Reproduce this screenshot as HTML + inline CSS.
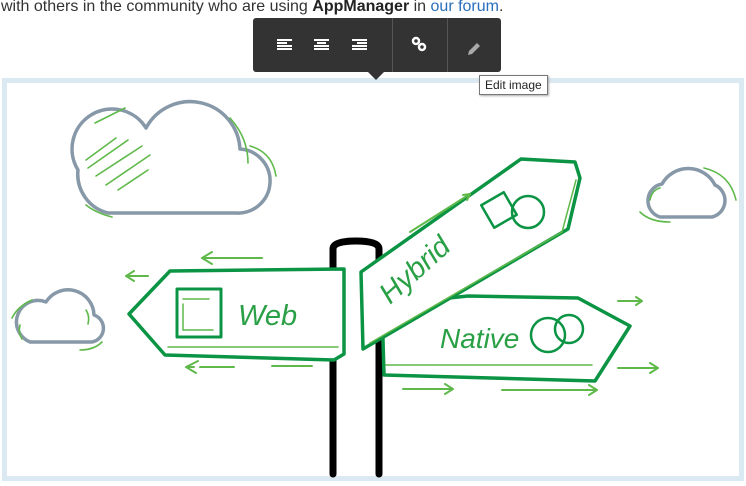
<!DOCTYPE html>
<html><head><meta charset="utf-8"><style>
html,body{margin:0;padding:0;background:#fff;width:746px;height:486px;overflow:hidden;position:relative;font-family:"Liberation Sans",sans-serif}
.t{position:absolute;left:1px;top:-2px;font-size:16px;color:#333;white-space:nowrap}
.t b{color:#222}.t a{color:#2a6ebb;text-decoration:none}
.frame{position:absolute;left:2px;top:78px;width:732px;height:393px;border:5px solid #dbe9f3}
.tb{position:absolute;left:253px;top:18px;width:248px;height:54px;background:#333;border-radius:3px}
.tb .s{position:absolute;top:0;width:1px;height:54px;background:#555}
.ptr{position:absolute;left:368px;top:72px;width:0;height:0;border-left:8px solid transparent;border-right:8px solid transparent;border-top:8px solid #333}
.tip{position:absolute;left:479px;top:75px;border:1px solid #777;background:#fff;font-size:12px;padding:2px 5px;color:#222;box-shadow:1px 1px 2px #aaa}
</style></head><body>
<div class="t">with others in the community who are using <b>AppManager</b> in <a>our forum</a>.</div>
<div class="frame"></div>
<svg style="position:absolute;left:0;top:0" width="746" height="486">
<g fill="none" stroke-linecap="round" stroke-linejoin="round">
<path d="M108,213 H236 A32,32 0 0 0 240,149 A50,50 0 0 0 146,128 A38,38 0 0 0 78,170 A40,40 0 0 0 108,213 Z" stroke="#8799a8" stroke-width="3.5"/>
<path d="M95,123 l30,-15 M86,160 l30,-22 M88,168 l40,-28 M96,176 l46,-30 M106,185 l44,-30 M118,190 l30,-20 M230,118 q18,20 18,45 M250,146 q22,6 26,30 M86,205 q10,8 26,12" stroke="#5fb94a" stroke-width="1.6"/>
<path d="M660,217 H712 A17,17 0 0 0 715,185 A30,30 0 0 0 662,184 A17,17 0 0 0 660,217 Z" stroke="#8799a8" stroke-width="3.5"/>
<path d="M704,168 q26,6 32,32 M640,212 q10,10 30,10 M650,200 q2,-10 10,-12" stroke="#5fb94a" stroke-width="1.6"/>
<path d="M30,342 H92 A14,14 0 0 0 94,315 A26,26 0 0 0 46,302 A20,20 0 0 0 30,342 Z" stroke="#8799a8" stroke-width="3.5"/>
<path d="M12,318 q6,-12 20,-18 M20,325 q-2,8 2,14 M86,310 q4,6 2,14 M80,350 q14,0 22,-8" stroke="#5fb94a" stroke-width="1.6"/>
<path d="M333,474 V249 Q333,241 356,241 Q379,241 379,249 V474" stroke="#000" stroke-width="7"/>
<path d="M129,314 L170,271 L344,269 L344,354 L334,360 L165,355 Z" fill="#fff" stroke="#0b9444" stroke-width="3.5"/>
<path d="M168,347 H338" stroke="#5fb94a" stroke-width="1.5"/>
<rect x="177" y="289" width="44" height="48" stroke="#0b9444" stroke-width="3"/>
<path d="M183,299 h26 M183,304 v26 h30" stroke="#5fb94a" stroke-width="1.5"/>
<text x="238" y="325" font-family="Liberation Sans" font-size="29" fill="#2aa046" font-style="italic">Web</text>
<path d="M262,258 H202 l10,-6 M202,258 l10,6 M148,276 h-22 l8,-5 M126,276 l8,5 M194,367 h-8 l12,-6 M186,367 l10,6 M200,367 H234 M272,366 h40" stroke="#5fb94a" stroke-width="2"/>
<path d="M468,296 L578,298 L630,326 L595,381 L384,375 L382,305 Z" fill="#fff" stroke="#0b9444" stroke-width="3.5"/>
<path d="M386,365 H592" stroke="#5fb94a" stroke-width="1.5"/>
<text x="440" y="348" font-family="Liberation Sans" font-size="28" fill="#2aa046" font-style="italic">Native</text>
<circle cx="548" cy="335" r="17" stroke="#0b9444" stroke-width="2.5"/>
<circle cx="569" cy="329" r="14" stroke="#0b9444" stroke-width="2.5"/>
<path d="M403,389 h50 l-8,-5 M453,389 l-8,5 M502,390 h95 l-8,-5 M597,390 l-8,5 M618,301 h24 l-6,-4 M642,301 l-6,4 M618,368 h40 l-8,-5 M658,368 l-8,5" stroke="#5fb94a" stroke-width="2"/>
<path d="M361,272 L521,159 L575,162 L580,178 L568,229 L363,349 Z" fill="#fff" stroke="#0b9444" stroke-width="3.5"/>
<path d="M370,343 L562,232 L576,180" stroke="#5fb94a" stroke-width="1.5"/>
<text x="0" y="0" transform="translate(390,305) rotate(-42)" font-family="Liberation Sans" font-size="29" fill="#2aa046" font-style="italic">Hybrid</text>
<rect x="486" y="197" width="26" height="26" transform="rotate(-30 499 210)" stroke="#0b9444" stroke-width="2.5"/>
<circle cx="528" cy="212" r="16" stroke="#0b9444" stroke-width="2.5"/>
<path d="M410,232 l60,-38 l-3,6 M470,194 l-7,1" stroke="#5fb94a" stroke-width="2"/>
</g></svg>
<div class="tb">
<div class="s" style="left:139px"></div><div class="s" style="left:194px"></div>
<svg width="248" height="54" style="position:absolute;left:0;top:0">
<g fill="#fff">
<rect x="24" y="21" width="15" height="2"/><rect x="24" y="24" width="10" height="2"/><rect x="24" y="27" width="15" height="2"/><rect x="24" y="30" width="15" height="2"/>
<rect x="61" y="21" width="15" height="2"/><rect x="64" y="24" width="9" height="2"/><rect x="61" y="27" width="15" height="2"/><rect x="61" y="30" width="15" height="2"/>
<rect x="99" y="21" width="15" height="2"/><rect x="104" y="24" width="10" height="2"/><rect x="99" y="27" width="15" height="2"/><rect x="99" y="30" width="15" height="2"/>
</g>
<g fill="none" stroke="#fff" stroke-width="2.5"><circle cx="163" cy="23" r="3"/><circle cx="169" cy="29" r="3"/></g>
<path d="M216,33 l8,-8 l3,3 l-8,8 l-4,1 z" fill="#aaa"/>
</svg></div>
<div class="ptr"></div>
<div class="tip">Edit image</div>
</body></html>
